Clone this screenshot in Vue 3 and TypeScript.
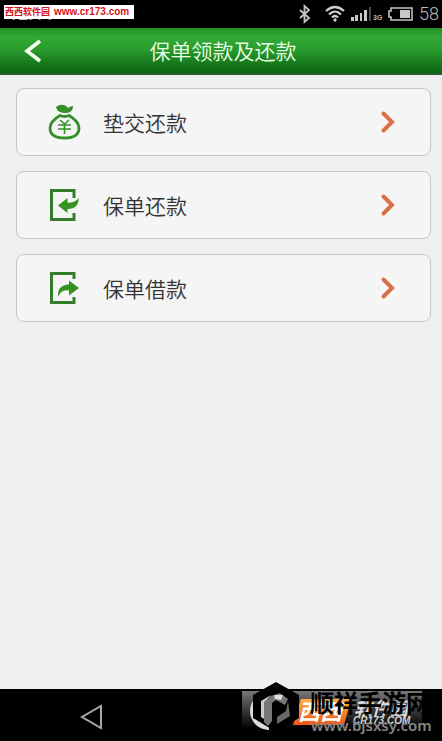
<script setup lang="ts">
type IconName = 'bag' | 'repay' | 'borrow'

interface MenuItem {
  label: string
  icon: IconName
}

const items: MenuItem[] = [
  { label: '垫交还款', icon: 'bag' },
  { label: '保单还款', icon: 'repay' },
  { label: '保单借款', icon: 'borrow' },
]
</script>

<template>
  <div class="screen">
    <div class="status">
      <span class="clock">12:44</span>
      <span class="site-tag"><b>西西软件园</b><b class="site-url">www.cr173.com</b></span>
      <div class="indicators">
        <svg width="14" height="20" viewBox="0 0 14 20" fill="none" stroke="#c4c4c4" stroke-width="1.8" aria-hidden="true">
          <path d="M2 6 L11 14 L6.500 18 V2 L11 6 L2 14" />
        </svg>
        <svg class="wifi" width="20" height="18" viewBox="0 0 20 18" fill="none" stroke="#d0d0d0" stroke-width="2.200" aria-hidden="true">
          <path d="M1 6 Q10 -2 19 6" />
          <path d="M4 9.500 Q10 3.500 16 9.500" />
          <path d="M7 12.500 Q10 9.500 13 12.500" />
          <circle cx="10" cy="15" r="1.200" fill="#d0d0d0" stroke-width="1" />
        </svg>
        <svg class="signal" width="32" height="16" viewBox="0 0 32 16" aria-hidden="true">
          <g fill="#c8c8c8">
            <rect x="0" y="11" width="3" height="4" />
            <rect x="4" y="9" width="3" height="6" />
            <rect x="9" y="7" width="2" height="8" />
            <rect x="13" y="4" width="3" height="11" />
          </g>
          <rect x="18" y="1" width="2" height="14" fill="#4a4a4a" />
          <text x="22" y="14" class="net">3G</text>
        </svg>
        <svg class="battery" width="26" height="14" viewBox="0 0 26 14" aria-hidden="true">
          <path d="M3 1 H24 V13 H3 V10 H1 V4 H3 Z" fill="none" stroke="#c4c4c4" stroke-width="1.6" />
          <rect x="12" y="3" width="10" height="8" fill="#c8c8c8" />
        </svg>
        <span class="percent">58</span>
      </div>
    </div>

    <header class="header">
      <button class="back" type="button" aria-label="返回">
        <svg width="20" height="24" viewBox="0 0 20 24" fill="none" stroke="#f4fff0" stroke-width="3.600" aria-hidden="true">
          <path d="M17 2 L4 12 L17 22" />
        </svg>
      </button>
      <h1 class="title">保单领款及还款</h1>
    </header>

    <main class="list">
      <button v-for="item in items" :key="item.label" class="card" type="button">
        <svg v-if="item.icon === 'bag'" class="icon" width="34" height="38" viewBox="0 0 34 38" aria-hidden="true">
          <path d="M9 4 Q12 1 17 2 Q20 3 21 5 Q23 3 26 3 Q26 10 19 10 Q10 10 9 4 Z" fill="#35902a" />
          <path d="M13 12.500 Q17.500 14.500 22 12.500 C28 16 32 20 32 25 C32 32 26 35 17.500 35 C9 35 3 32 3 25 C3 20 7 16 13 12.500 Z" fill="none" stroke="#35902a" stroke-width="2.800" />
          <path d="M13 17 L17.500 21 L22 17 M11 22 H24 M11 26 H24 M17.500 21 V31" fill="none" stroke="#35902a" stroke-width="1.600" />
        </svg>
        <svg v-else class="icon" width="34" height="38" viewBox="0 0 34 38" aria-hidden="true">
          <g fill="none" stroke="#357d2c" stroke-width="3">
            <path v-if="item.icon === 'repay'" d="M27 12 V4.500 H4.500 V33.500 H27 V27" />
            <path v-else d="M27 10 V4.500 H4.500 V33.500 H27 V28" />
          </g>
          <path
            v-if="item.icon === 'repay'"
            d="M11 19.500 L20.500 12 V16.500 Q27 17.500 32 12 Q31 24 20.500 23 V27 Z"
            fill="#359322"
          />
          <path
            v-else
            d="M11 28 Q10 16 22 15.500 V11.500 L32 19 L22 26.500 V21.500 Q14 20 11 28 Z"
            fill="#359322"
          />
        </svg>
        <span class="label">{{ item.label }}</span>
        <svg class="chevron" width="16" height="26" viewBox="0 0 16 26" fill="none" stroke="#d97048" stroke-width="4" stroke-linecap="round" aria-hidden="true">
          <path d="M3.500 4.500 L12 13 L3.500 21.500" />
        </svg>
      </button>
    </main>

    <footer class="navbar">
      <button class="nav-back" type="button" aria-label="后退">
        <svg width="24" height="28" viewBox="0 0 24 28" fill="none" stroke="#a8a8a8" stroke-width="2" aria-hidden="true">
          <path d="M21 3 V25 L2 14 Z" />
        </svg>
      </button>
      <svg class="watermark" width="200" height="59" viewBox="0 0 200 59">
        <defs>
          <linearGradient id="plate" x1="0" y1="0" x2="0" y2="1">
            <stop offset="0" stop-color="#777" />
            <stop offset="0.500" stop-color="#393939" />
            <stop offset="1" stop-color="#000" />
          </linearGradient>
          <linearGradient id="orange" x1="0" y1="0" x2="0" y2="1">
            <stop offset="0" stop-color="#ffad42" />
            <stop offset="1" stop-color="#ed571b" />
          </linearGradient>
        </defs>
        <rect x="0" y="9" width="180" height="38" fill="url(#plate)" />
        <path d="M27 10 A19 19 0 0 0 27 48 V42 A14 14 0 0 1 27 16 Z" fill="#ddd" />
        <path d="M59 17 H109 L102 43 H51 Z" fill="url(#orange)" />
        <text x="56" y="38" class="brand">西西</text>
        <text x="112" y="33" class="brand-side">软件园</text>
        <text x="111" y="42" class="brand-url">CR173.COM</text>
        <path d="M34 0 L57 13 V36 L34 50 L11 36 V13 Z" fill="#000" />
        <path d="M19 19 L29 13 L22 21 V37 L19 35 Z" fill="#ccc" />
        <path d="M29 14 L38 11 L46 17 L43 23 L34 18 L30 21 V39 L26 44 L22 40 V20 Z" fill="#777" />
        <path d="M32 13 H41 L39 18 L33 17 Z" fill="#ddd" />
        <path d="M46 19 L48 34 L35 42 V35 L44 29 Z" fill="#686868" />
        <path d="M33 21 L44 28 L33 35 Z" fill="#000" />
        <text x="68" y="30" class="mark">顺祥手游网</text>
        <text x="69" y="49" class="mark-url">www.bjsxsy.com</text>
      </svg>
    </footer>
  </div>
</template>

<style>
body {
  margin: 0;
  background: #efefef;
}
</style>

<style scoped>
.screen {
  display: flex;
  flex-direction: column;
  min-height: 100vh;
  background: #efefef;
  font-family: "Noto Sans CJK SC", sans-serif;
}

button {
  margin: 0;
  padding: 0;
  border: 0;
  background: none;
  font: inherit;
  cursor: pointer;
}

svg {
  display: block;
  flex: none;
}

.status {
  position: relative;
  display: flex;
  align-items: center;
  justify-content: space-between;
  height: 28px;
  background: #000;
  color: #bdbdbd;
  overflow: hidden;
}

.clock {
  padding-left: 8px;
  font: 18px/28px Roboto, sans-serif;
}

.site-tag {
  position: absolute;
  left: 4px;
  top: 5px;
  display: flex;
  align-items: center;
  gap: 4px;
  width: 129px;
  height: 14px;
  padding-left: 1px;
  background: #fff;
  color: #d5121c;
  font: 9px/14px "Liberation Sans", "Noto Sans CJK SC", sans-serif;
  white-space: nowrap;
}

.site-url {
  font-size: 10px;
}

.indicators {
  display: flex;
  align-items: center;
}

.wifi {
  margin-left: 13px;
}

.signal {
  margin-left: 6px;
}

.battery {
  margin-left: 5px;
}

.net {
  font: bold 7px "Liberation Sans", sans-serif;
  fill: #b8b8b8;
}

.percent {
  width: 23px;
  margin-left: 5px;
  font: 300 18px/28px Roboto, sans-serif;
}

.header {
  display: grid;
  grid-template-columns: 60px 1fr 56px;
  align-items: center;
  height: 47px;
  box-sizing: border-box;
  border-bottom: 2px solid #2c5c30;
  background: linear-gradient(#249027, #32a936 20%, #2a9e2e 45%, #16781a 80%, #0c6513);
}

.back {
  display: flex;
  align-items: center;
  height: 45px;
  padding-left: 23px;
}

.title {
  margin: 0;
  color: #eaffe6;
  font-size: 21px;
  font-weight: 350;
  line-height: 45px;
  text-align: center;
}

.list {
  display: flex;
  flex: 1;
  flex-direction: column;
  gap: 15px;
  padding: 13px 11px 24px 16px;
}

.card {
  display: flex;
  align-items: center;
  height: 68px;
  box-sizing: border-box;
  padding: 0 34px 0 30px;
  border: 1px solid #c6c6c6;
  border-radius: 8px;
  background: #f5f5f5;
  color: #333;
  text-align: left;
}

.label {
  flex: 1;
  padding-left: 22px;
  font-size: 21px;
  font-weight: 350;
  line-height: 32px;
}

.navbar {
  position: relative;
  display: flex;
  align-items: center;
  height: 52px;
  background: #000;
}

.nav-back {
  margin: 4px 0 0 80px;
}

.watermark {
  position: absolute;
  right: 0;
  bottom: 0;
}

.brand {
  font: italic bold 22px "Noto Sans CJK SC", sans-serif;
  fill: #fff;
}

.brand-side {
  font: italic bold 18px "Noto Sans CJK SC", sans-serif;
  fill: #ddd;
}

.brand-url {
  font: italic bold 10px "Liberation Sans", sans-serif;
  fill: #d5d5d5;
}

.mark {
  font: bold 24px "Noto Sans CJK SC", sans-serif;
  fill: #000;
}

.mark-url {
  font: 600 15px "Noto Sans", sans-serif;
  fill: #858585;
}
</style>
